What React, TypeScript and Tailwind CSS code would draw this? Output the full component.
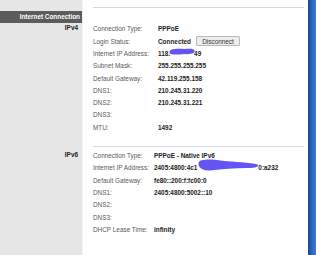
import type { ReactNode } from "react";

const font = { fontFamily: '"Liberation Sans", Arial, sans-serif' };

function Blob({ className, d }: { className: string; d: string }) {
    return (
        <svg className={`pointer-events-none absolute ${className}`} viewBox="0 0 100 20" preserveAspectRatio="none">
            <path d={d} fill="#5b4cf2" opacity="0.95" />
        </svg>
    );
}

function Row({ label, labelW, children }: { label: string; labelW: string; children?: ReactNode }) {
    return (
        <div className="flex h-[12.3px] items-center">
            <div className={`${labelW} shrink-0 text-[6.4px] text-[#5a5a5a]`}>{label}</div>
            <div className="flex items-center text-[6.4px] font-bold text-[#222]">{children}</div>
        </div>
    );
}

export default function App() {
    return (
        <div className="flex h-[255px] w-[316px] overflow-hidden bg-white" style={font}>

            <aside className="flex w-[83px] shrink-0 flex-col border-r border-[#f3f3f3] bg-[#e6e6e6] pt-[11px]">
                <div className="flex h-[12px] items-center justify-end bg-[#5c5c5c] pr-[2px] text-[6.4px] font-bold text-white">
                    Internet Connection
                </div>
                <div className="mt-px pr-[4px] text-right text-[6.4px] leading-[7px] font-bold text-[#222]">IPv4</div>
                <div className="mt-[120px] pr-[4px] text-right text-[6.4px] leading-[7px] font-bold text-[#222]">IPv6</div>
            </aside>

            <main className="flex flex-1 flex-col pt-[7px] pr-[4px] pl-[10px]">
                <div className="h-px bg-[#d8d8e4]" />

                <div className="mt-[15px]">
                    <Row label="Connection Type:" labelW="w-[65px]">PPPoE</Row>
                    <Row label="Login Status:" labelW="w-[65px]">
                        Connected
                        <span className="ml-[5px] flex h-[10px] w-[44px] items-center justify-center rounded-[1px] border border-[#b9b9b9] bg-[#ededed] text-[6.4px] font-normal text-[#333]">
                            Disconnect
                        </span>
                    </Row>
                    <Row label="Internet IP Address:" labelW="w-[65px]">
                        <span className="relative">
                            118.<span className="inline-block w-[24px]" />49
                            <Blob
                                className="top-[-1px] left-[11px] h-[7px] w-[26px]"
                                d="M2 10 C4 2 30 1 60 3 C80 1 97 2 99 8 C100 15 85 19 60 17 C35 19 8 20 2 15 Z"
                            />
                        </span>
                    </Row>
                    <Row label="Subnet Mask:" labelW="w-[65px]">255.255.255.255</Row>
                    <Row label="Default Gateway:" labelW="w-[65px]">42.119.255.158</Row>
                    <Row label="DNS1:" labelW="w-[65px]">210.245.31.220</Row>
                    <Row label="DNS2:" labelW="w-[65px]">210.245.31.221</Row>
                    <Row label="DNS3:" labelW="w-[65px]" />
                    <Row label="MTU:" labelW="w-[65px]">1492</Row>
                </div>

                <div className="mt-[12px] h-px bg-[#d8d8e4]" />

                <div className="mt-[3px]">
                    <Row label="Connection Type:" labelW="w-[61px]">PPPoE - Native IPv6</Row>
                    <Row label="Internet IP Address:" labelW="w-[61px]">
                        <span className="relative">
                            2405:4800:4c1<span className="inline-block w-[61px]" />0:a232
                            <Blob
                                className="top-[-4px] left-[44px] h-[12px] w-[61px]"
                                d="M1 6 C3 0 20 0 40 3 C60 5 85 6 98 9 C100 12 96 15 80 15 C60 15 40 17 20 19 C6 20 0 14 1 6 Z"
                            />
                        </span>
                    </Row>
                    <Row label="Default Gateway:" labelW="w-[61px]">fe80::200:f:fc00:0</Row>
                    <Row label="DNS1:" labelW="w-[61px]">2405:4800:5002::10</Row>
                    <Row label="DNS2:" labelW="w-[61px]" />
                    <Row label="DNS3:" labelW="w-[61px]" />
                    <Row label="DHCP Lease Time:" labelW="w-[61px]">infinity</Row>
                </div>
            </main>

            <div className="w-[8px] shrink-0 bg-linear-to-r from-[#1b448c] via-[#2d66c0] to-[#3c7bd6]" />
        </div>
    );
}
